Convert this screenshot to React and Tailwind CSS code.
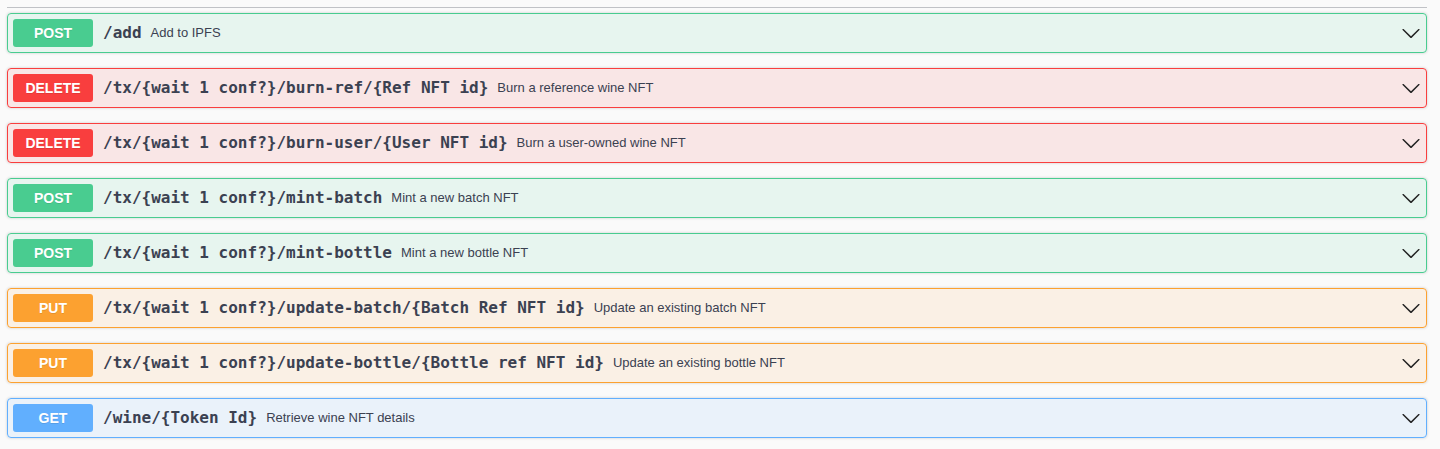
import React from 'react'

const styles = {
  post: { block: 'bg-[#49cc90]/10 border-[#49cc90]', badge: 'bg-[#49cc90]' },
  delete: { block: 'bg-[#f93e3e]/10 border-[#f93e3e]', badge: 'bg-[#f93e3e]' },
  put: { block: 'bg-[#fca130]/10 border-[#fca130]', badge: 'bg-[#fca130]' },
  get: { block: 'bg-[#61affe]/10 border-[#61affe]', badge: 'bg-[#61affe]' },
}

const endpoints = [
  { method: 'post', path: '/add', summary: 'Add to IPFS' },
  { method: 'delete', path: '/tx/{wait 1 conf?}/burn-ref/{Ref NFT id}', summary: 'Burn a reference wine NFT' },
  { method: 'delete', path: '/tx/{wait 1 conf?}/burn-user/{User NFT id}', summary: 'Burn a user-owned wine NFT' },
  { method: 'post', path: '/tx/{wait 1 conf?}/mint-batch', summary: 'Mint a new batch NFT' },
  { method: 'post', path: '/tx/{wait 1 conf?}/mint-bottle', summary: 'Mint a new bottle NFT' },
  { method: 'put', path: '/tx/{wait 1 conf?}/update-batch/{Batch Ref NFT id}', summary: 'Update an existing batch NFT' },
  { method: 'put', path: '/tx/{wait 1 conf?}/update-bottle/{Bottle ref NFT id}', summary: 'Update an existing bottle NFT' },
  { method: 'get', path: '/wine/{Token Id}', summary: 'Retrieve wine NFT details' },
]

function Arrow() {
  return (
    <svg width="20" height="20" viewBox="0 0 20 20" className="shrink-0 fill-[#222]">
      <path d="M17.418 6.109c.272-.268.709-.268.979 0s.271.701 0 .969l-7.908 7.83c-.27.268-.707.268-.979 0l-7.908-7.83c-.27-.268-.27-.701 0-.969.271-.268.709-.268.979 0L10 13.25l7.418-7.141z" />
    </svg>
  )
}

function Operation({ method, path, summary }) {
  const s = styles[method]
  return (
    <div className={`mb-[15px] rounded-[4px] border shadow-[0_0_3px_rgba(0,0,0,0.19)] ${s.block}`}>
      <div className="flex items-center p-[5px]">
        <span
          className={`min-w-[80px] rounded-[3px] py-[6px] text-center text-[14px] leading-[16px] font-bold text-white text-shadow-[0_1px_0_rgba(0,0,0,0.1)] ${s.badge}`}
          style={{ fontFamily: '"Liberation Sans", Arial, sans-serif' }}
        >
          {method.toUpperCase()}
        </span>
        <span
          className="pl-[10px] pr-[9px] text-[16px] font-bold text-[#3b4151]"
          style={{ fontFamily: '"DejaVu Sans Mono", monospace' }}
        >
          {path}
        </span>
        <span
          className="flex-1 text-[13px] text-[#3b4151]"
          style={{ fontFamily: '"Liberation Sans", Arial, sans-serif' }}
        >
          {summary}
        </span>
        <Arrow />
      </div>
    </div>
  )
}

export default function App() {
  return (
    <div className="min-h-screen bg-[#fafafa] pl-[7px] pr-[13px]">
      <div className="h-[8px] border-b border-[#3b4151]/30 mb-[5px]"></div>
      {endpoints.map((e, i) => (
        <Operation key={i} {...e} />
      ))}
    </div>
  )
}
